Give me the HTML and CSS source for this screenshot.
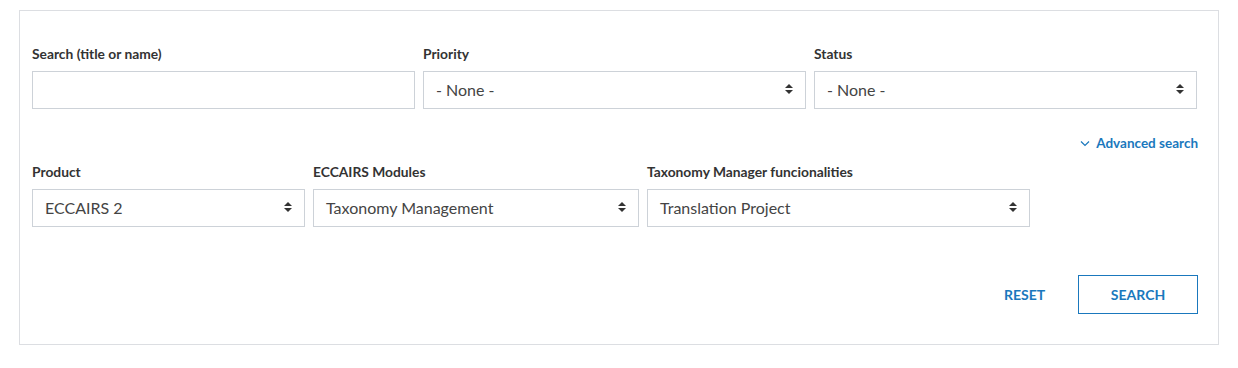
FILE: index.html
```html
<!DOCTYPE html>
<html>
<head>
<meta charset="utf-8">
<link rel="stylesheet" href="styles.css">
</head>
<body>
<div class="card">
  <div class="row row-top">
    <div class="field w383">
      <label class="lbl">Search (title or name)</label>
      <div class="box"></div>
    </div>
    <div class="field w383">
      <label class="lbl">Priority</label>
      <div class="box sel"><span>- None -</span><svg class="arr" width="8" height="12" viewBox="0 0 8 12"><path d="M0 5 L4 1 L8 5 Z M0 7 L4 11 L8 7 Z" fill="#333"/></svg></div>
    </div>
    <div class="field w383">
      <label class="lbl">Status</label>
      <div class="box sel"><span>- None -</span><svg class="arr" width="8" height="12" viewBox="0 0 8 12"><path d="M0 5 L4 1 L8 5 Z M0 7 L4 11 L8 7 Z" fill="#333"/></svg></div>
    </div>
  </div>
  <div class="adv-row">
    <a class="adv"><svg width="10" height="7" viewBox="0 0 10 7"><path d="M1 1.5 L5 5.5 L9 1.5" fill="none" stroke="#1a78bd" stroke-width="1.2"/></svg>Advanced search</a>
  </div>
  <div class="row">
    <div class="field w273">
      <label class="lbl">Product</label>
      <div class="box sel"><span>ECCAIRS 2</span><svg class="arr" width="8" height="12" viewBox="0 0 8 12"><path d="M0 5 L4 1 L8 5 Z M0 7 L4 11 L8 7 Z" fill="#333"/></svg></div>
    </div>
    <div class="field w326">
      <label class="lbl">ECCAIRS Modules</label>
      <div class="box sel"><span>Taxonomy Management</span><svg class="arr" width="8" height="12" viewBox="0 0 8 12"><path d="M0 5 L4 1 L8 5 Z M0 7 L4 11 L8 7 Z" fill="#333"/></svg></div>
    </div>
    <div class="field w383">
      <label class="lbl">Taxonomy Manager funcionalities</label>
      <div class="box sel"><span>Translation Project</span><svg class="arr" width="8" height="12" viewBox="0 0 8 12"><path d="M0 5 L4 1 L8 5 Z M0 7 L4 11 L8 7 Z" fill="#333"/></svg></div>
    </div>
  </div>
  <div class="actions">
    <button class="btn-reset">RESET</button>
    <button class="btn-search">SEARCH</button>
  </div>
</div>
</body>
</html>
```
FILE: styles.css
```css
* { box-sizing: border-box; }
body {
  margin: 0;
  padding: 10px 19px 0 19px;
  font-family: Lato, "Liberation Sans", sans-serif;
  background: #fff;
  color: #333;
}
.card {
  width: 1200px;
  border: 1px solid #dcdee2;
  padding: 34px 21px 30px 12px;
}
.row {
  display: flex;
  gap: 8px;
}
.field {
  display: flex;
  flex-direction: column;
}
.w383 { width: 383px; }
.w273 { width: 273px; }
.w326 { width: 326px; }
.lbl {
  font-size: 13.8px;
  font-weight: 700;
  line-height: 17px;
  color: #333;
  margin-bottom: 9px;
}
.box {
  height: 38px;
  border: 1px solid #cdd2d8;
  background: #fff;
}
.sel {
  display: flex;
  align-items: center;
  justify-content: space-between;
  padding: 0 12px 2px 12px;
  font-size: 16px;
  color: #444;
}
.arr { display: block; }
.adv-row {
  display: flex;
  justify-content: flex-end;
  margin-top: 26px;
  margin-bottom: 11px;
  margin-right: -1px;
}
.adv {
  display: flex;
  align-items: center;
  gap: 6px;
  font-size: 13.5px;
  font-weight: 700;
  line-height: 17px;
  color: #1a78bd;
}
.actions {
  display: flex;
  justify-content: flex-end;
  align-items: center;
  margin-top: 48px;
  margin-right: -1px;
}
.btn-reset, .btn-search {
  font-family: Lato, "Liberation Sans", sans-serif;
  font-size: 14px;
  font-weight: 700;
  color: #1a78bd;
  background: #fff;
  cursor: pointer;
}
.btn-reset {
  border: none;
  padding: 0;
  width: 74px;
  height: 39px;
  text-align: left;
}
.btn-search {
  width: 120px;
  height: 39px;
  border: 1px solid #1a78bd;
}
```
